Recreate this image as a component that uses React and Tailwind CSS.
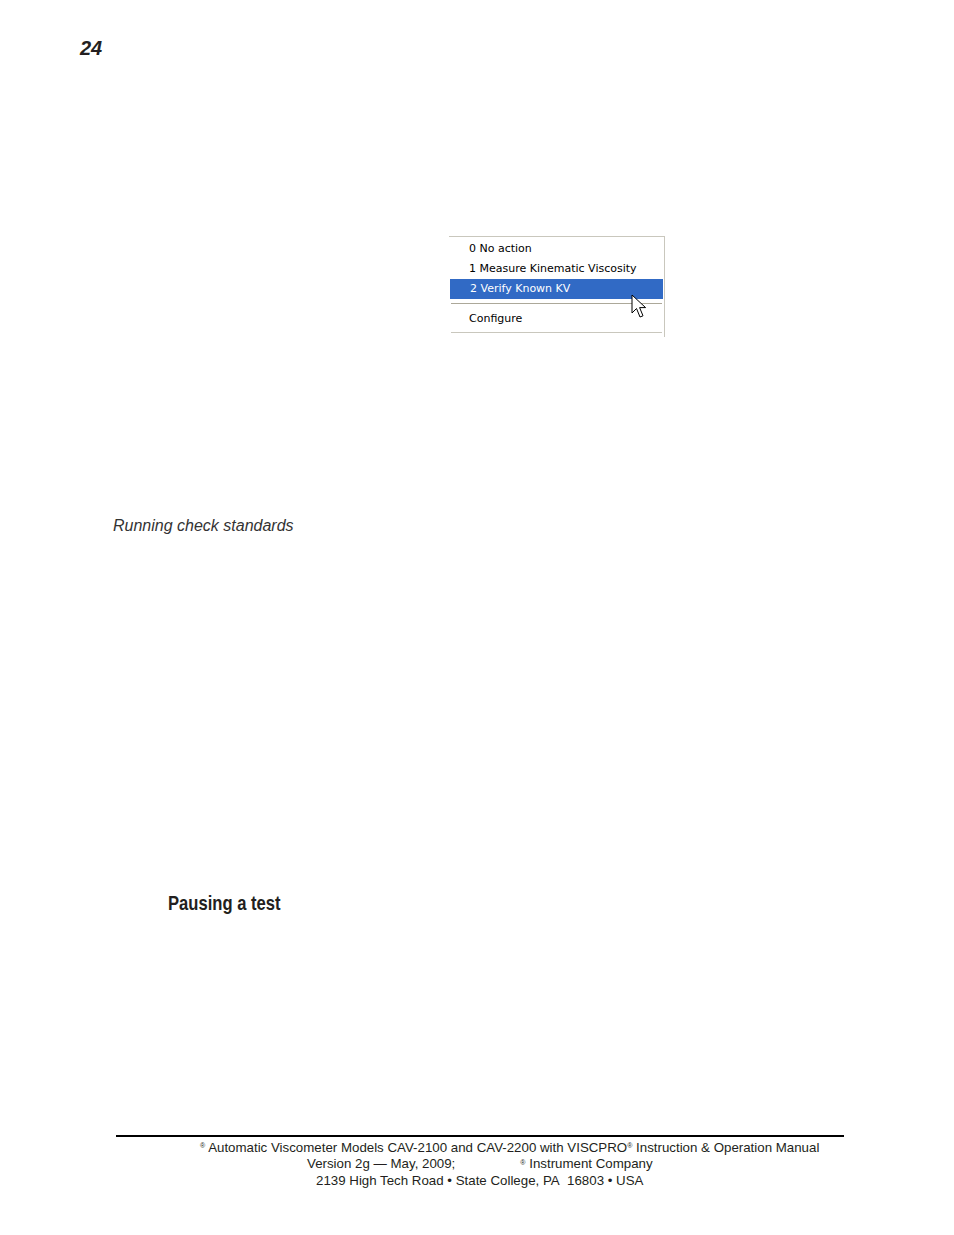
import React from 'react'

const ITEMS = [
  { label: '0 No action' },
  { label: '1 Measure Kinematic Viscosity' },
  { label: '2 Verify Known KV', active: true },
]

function Cursor() {
  return (
    <svg width="17" height="26" viewBox="0 0 17 26" className="absolute left-[182px] top-[57px]">
      <path d="M1 1 L1 19 L5.5 14.5 L9 23 L12 21.8 L8.6 13.6 L14.6 13.6 Z" fill="#fff" stroke="#000" strokeWidth="1" strokeLinejoin="miter" />
    </svg>
  )
}

function ContextMenu() {
  return (
    <div className="relative ml-[449px] mt-[177px] w-[216px] h-[101px] border-t border-r border-[#c9c7bd] font-['DejaVu_Sans',sans-serif] text-[11px] text-black">
      <div className="pt-[2px]">
        {ITEMS.map((it, i) => (
          <div key={i} className={`h-[20px] flex items-center pl-[20px] mr-[1px] ${it.active ? 'bg-[#316ac5] text-white ml-[1px] pl-[19px]' : ''}`}>
            {it.label}
          </div>
        ))}
      </div>
      <div className="mt-[4px] mx-[2px] h-[2px] border-t border-[#aca899] border-b border-b-white" />
      <div className="h-[20px] mt-[4px] flex items-center pl-[20px]">Configure</div>
      <div className="mt-[3px] ml-[2px] mr-[2px] h-px bg-[#c9c7bd]" />
      <Cursor />
    </div>
  )
}

export default function App() {
  return (
    <div className="w-[954px] h-[1235px] bg-white flex flex-col font-['Liberation_Sans',sans-serif] text-[#231f20]">
      {/* page number */}
      <div className="pl-[80px] pt-[37px] text-[20px] leading-[22px] font-bold italic">24</div>

      <ContextMenu />

      {/* caption */}
      <div className="pl-[113px] mt-[180px] text-[16px] leading-[18px] italic text-[#333]">Running check standards</div>

      {/* section heading */}
      <div className="pl-[168px] mt-[356px] text-[21px] leading-[24px] font-bold text-[#231f20]">
        <span className="inline-block origin-left scale-x-[0.79]">Pausing a test</span>
      </div>

      {/* footer */}
      <div className="mt-auto mb-[46px] ml-[116px] w-[728px]">
        <div className="h-[2px] bg-black" />
        <div className="pt-[3px] text-[13.3px] leading-[16.5px] text-[#231f20]">
          <div className="pl-[84px]">
            <sup className="text-[7px]">®</sup> Automatic Viscometer Models CAV-2100 and CAV-2200 with VISCPRO<sup className="text-[7px]">®</sup> Instruction &amp; Operation Manual
          </div>
          <div className="pl-[191px] flex">
            <span>Version 2g — May, 2009;</span>
            <span className="w-[65px]" />
            <span><sup className="text-[7px]">®</sup> Instrument Company</span>
          </div>
          <div className="pl-[200px]">2139 High Tech Road • State College, PA&nbsp; 16803 • USA</div>
        </div>
      </div>
    </div>
  )
}
